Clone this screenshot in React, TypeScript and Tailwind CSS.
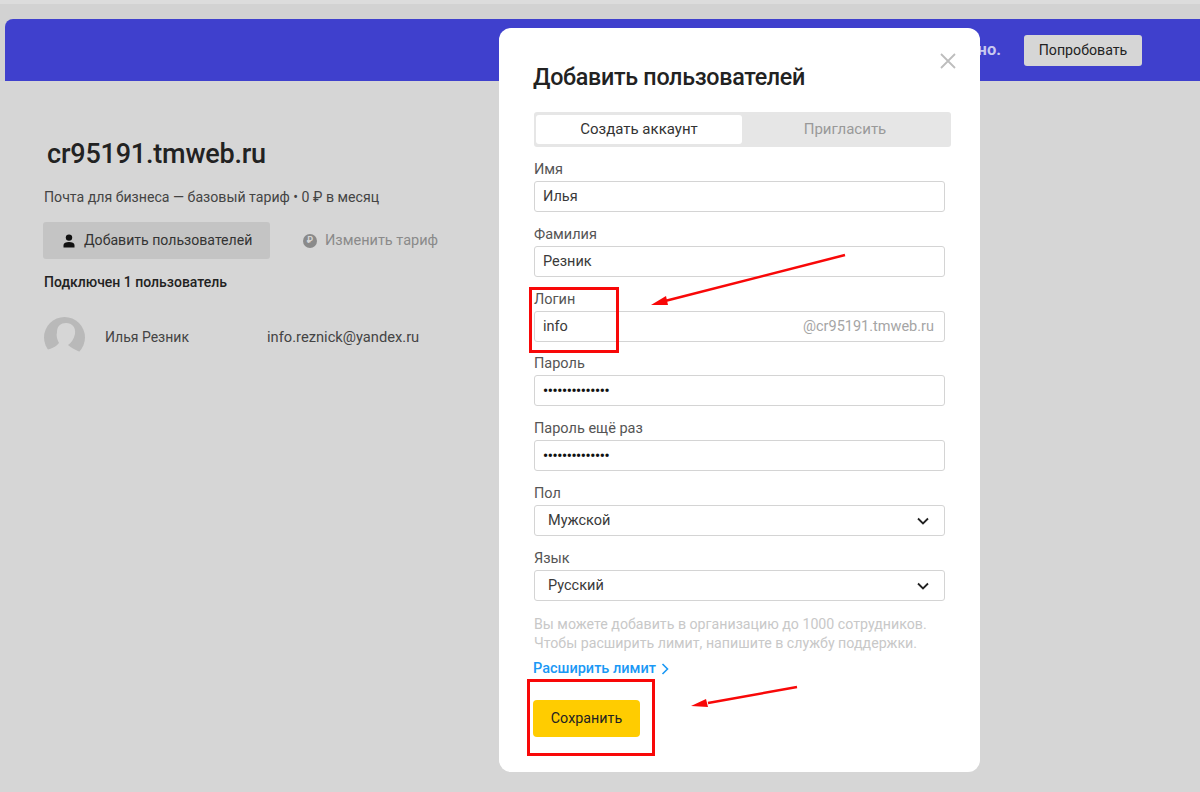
import React from 'react';

// ---- form data ----
const textFields = [
  { label: 'Имя', value: 'Илья' },
  { label: 'Фамилия', value: 'Резник' },
];

const Field = ({ label, children }: { label: string; children: React.ReactNode }) => (
  <div className="h-[64.75px]">
    <div className="h-[22px] text-[14.5px] leading-[21px] text-[#555]">{label}</div>
    {children}
  </div>
);

const Box = ({ children }: { children: React.ReactNode }) => (
  <div className="flex h-[31px] w-[411px] items-center justify-between rounded-[3px] border border-[#d4d4d4] bg-white pl-[8px] pr-[10px] pt-[1px] text-[14.5px] text-[#3a3a3a]">
    {children}
  </div>
);

const Dots = () => (
  <span className="mt-[1px] text-[14px] font-bold tracking-[-0.3px] text-[#111]">••••••••••••••</span>
);

const Select = ({ value }: { value: string }) => (
  <Box>
    <span className="pl-[5px]">{value}</span>
    <svg width="14" height="14" viewBox="0 0 14 14" fill="none" stroke="#222" strokeWidth="1.8" className="mr-[4px]">
      <path d="M2 4.5 7 9.5 12 4.5" />
    </svg>
  </Box>
);

// red annotation arrow, coords are in page pixels
const Arrow = ({ line, head }: { line: [number, number, number, number]; head: string }) => (
  <>
    <line x1={line[0]} y1={line[1]} x2={line[2]} y2={line[3]} stroke="#f80808" strokeWidth="2.5" />
    <polygon points={head} fill="#f80808" />
  </>
);

export default function App() {
  return (
    <div className="relative h-[792px] w-[1200px] overflow-hidden bg-[#d6d6d6] font-['Roboto','Liberation_Sans',sans-serif]">
      <div className="h-[4px] bg-[#dcdcdc]" />
      <div className="h-[15px] bg-[#d2d2d2]" />

      {/* promo banner */}
      <div className="bg-[#d2d2d2]">
        <div className="ml-[5px] flex h-[62px] items-start justify-end rounded-tl-[8px] bg-[#3f40cd] pr-[58px] pt-[16px]">
          <span className="mr-[23px] mt-[3px] text-[16.5px] font-bold text-[#c9c9ef]">но.</span>
          <div className="flex h-[31px] w-[118px] items-center justify-center rounded-[3px] bg-[#d6d6d6] text-[14.2px] text-[#222]">
            Попробовать
          </div>
        </div>
      </div>

      {/* page content */}
      <div className="pl-[44px] pt-[55px]">
        <h1 className="ml-[3px] h-[36px] text-[27px] font-medium leading-[36px] tracking-[-0.2px] text-[#222]">cr95191.tmweb.ru</h1>
        <p className="mt-[15px] h-[20px] text-[14.15px] leading-[20px] text-[#444]">Почта для бизнеса — базовый тариф • 0 ₽ в месяц</p>
        <div className="mt-[15px] flex items-center">
          <div className="ml-[-1px] flex h-[37px] w-[227px] items-center rounded-[3px] bg-[#c4c4c4] pl-[20px] text-[14.1px] text-[#333]">
            <svg width="12" height="14" viewBox="0 0 12 14" fill="#111" className="mr-[9px]">
              <circle cx="6" cy="3.6" r="3.2" />
              <path d="M0.5 13.5V11c0-2 2.5-3 5.5-3s5.5 1 5.5 3v2.5z" />
            </svg>
            Добавить пользователей
          </div>
          <div className="ml-[33px] flex items-center text-[14.5px] text-[#8a8a8a]">
            <span className="mr-[8px] flex h-[14px] w-[14px] items-center justify-center rounded-full bg-[#8a8a8a] text-[9px] font-bold text-[#d6d6d6]">₽</span>
            Изменить тариф
          </div>
        </div>
        <div className="mt-[13px] h-[20px] text-[14px] font-medium leading-[20px] text-[#222]">Подключен 1 пользователь</div>
        <div className="mt-[24px] flex h-[42px] items-center">
          <svg width="41" height="41" viewBox="0 0 41 41">
            <circle cx="20.5" cy="20.5" r="20.5" fill="#b9b9b9" />
            <path d="M3 33C8 31 12 30 15 26 13 22 12 19 13 15 13 9 17 6 22 6 28 6 32 10 31 17 30 22 27 26 24 28 26 30 30 32 36 35V41H3z" fill="#d6d6d6" />
          </svg>
          <span className="ml-[20px] w-[162px] text-[14px] text-[#444]">Илья Резник</span>
          <span className="text-[14.7px] text-[#444]">info.reznick@yandex.ru</span>
        </div>
      </div>

      {/* modal */}
      <div className="absolute left-[499px] top-[28px] h-[744px] w-[481px] rounded-[12px] bg-white pl-[35px] pt-[32px]">
        <svg width="16" height="16" viewBox="0 0 16 16" stroke="#bdbdbd" strokeWidth="1.8" className="absolute left-[441px] top-[25px]">
          <path d="M1 1 15 15M15 1 1 15" />
        </svg>
        <h2 className="ml-[-1px] h-[34px] text-[23.3px] font-medium leading-[34px] tracking-[-0.3px] text-[#222]">Добавить пользователей</h2>
        <div className="mt-[18px] flex h-[35px] w-[417px] rounded-[3px] bg-[#e6e6e6] py-[3px] pl-[2px] pr-[3px] text-[15px]">
          <div className="flex w-[206px] items-center justify-center rounded-[3px] bg-white text-[#333]">Создать аккаунт</div>
          <div className="flex flex-1 items-center justify-center text-[#999]">Пригласить</div>
        </div>
        <div className="mt-[12px]">
          {textFields.map((f) => (
            <Field key={f.label} label={f.label}>
              <Box>{f.value}</Box>
            </Field>
          ))}
          <Field label="Логин">
            <Box>
              info
              <span className="text-[#a5a5a5]">@cr95191.tmweb.ru</span>
            </Box>
          </Field>
          <Field label="Пароль">
            <Box><Dots /></Box>
          </Field>
          <Field label="Пароль ещё раз">
            <Box><Dots /></Box>
          </Field>
          <Field label="Пол">
            <Select value="Мужской" />
          </Field>
          <Field label="Язык">
            <Select value="Русский" />
          </Field>
        </div>
        <p className="mt-[3px] text-[14.2px] leading-[18.5px] text-[#c8c8c8]">
          Вы можете добавить в организацию до 1000 сотрудников.
          <br />
          Чтобы расширить лимит, напишите в службу поддержки.
        </p>
        <div className="ml-[-1px] mt-[6px] flex items-center text-[14.5px] font-medium text-[#1a98f5]">
          Расширить лимит
          <svg width="8" height="12" viewBox="0 0 8 12" fill="none" stroke="#1a98f5" strokeWidth="1.6" className="ml-[5px]">
            <path d="M1.5 1 6.5 6 1.5 11" />
          </svg>
        </div>
        <div className="ml-[-1px] mt-[20px] flex h-[37px] w-[107px] items-center justify-center rounded-[4px] bg-[#fc0] text-[14.3px] text-[#222]">
          Сохранить
        </div>
      </div>

      {/* red annotations laid over the screenshot */}
      <div className="absolute left-[529px] top-[287px] h-[66px] w-[90px] border-[3px] border-[#f80808]" />
      <div className="absolute left-[527px] top-[679px] h-[77px] w-[128px] border-[3px] border-[#f80808]" />
      <svg width="1200" height="792" className="pointer-events-none absolute left-0 top-0">
        <Arrow line={[845, 255, 665, 301]} head="651,305 666,296 668,305" />
        <Arrow line={[797, 687, 708, 703]} head="691,706 706,699 708,707" />
      </svg>
    </div>
  );
}
